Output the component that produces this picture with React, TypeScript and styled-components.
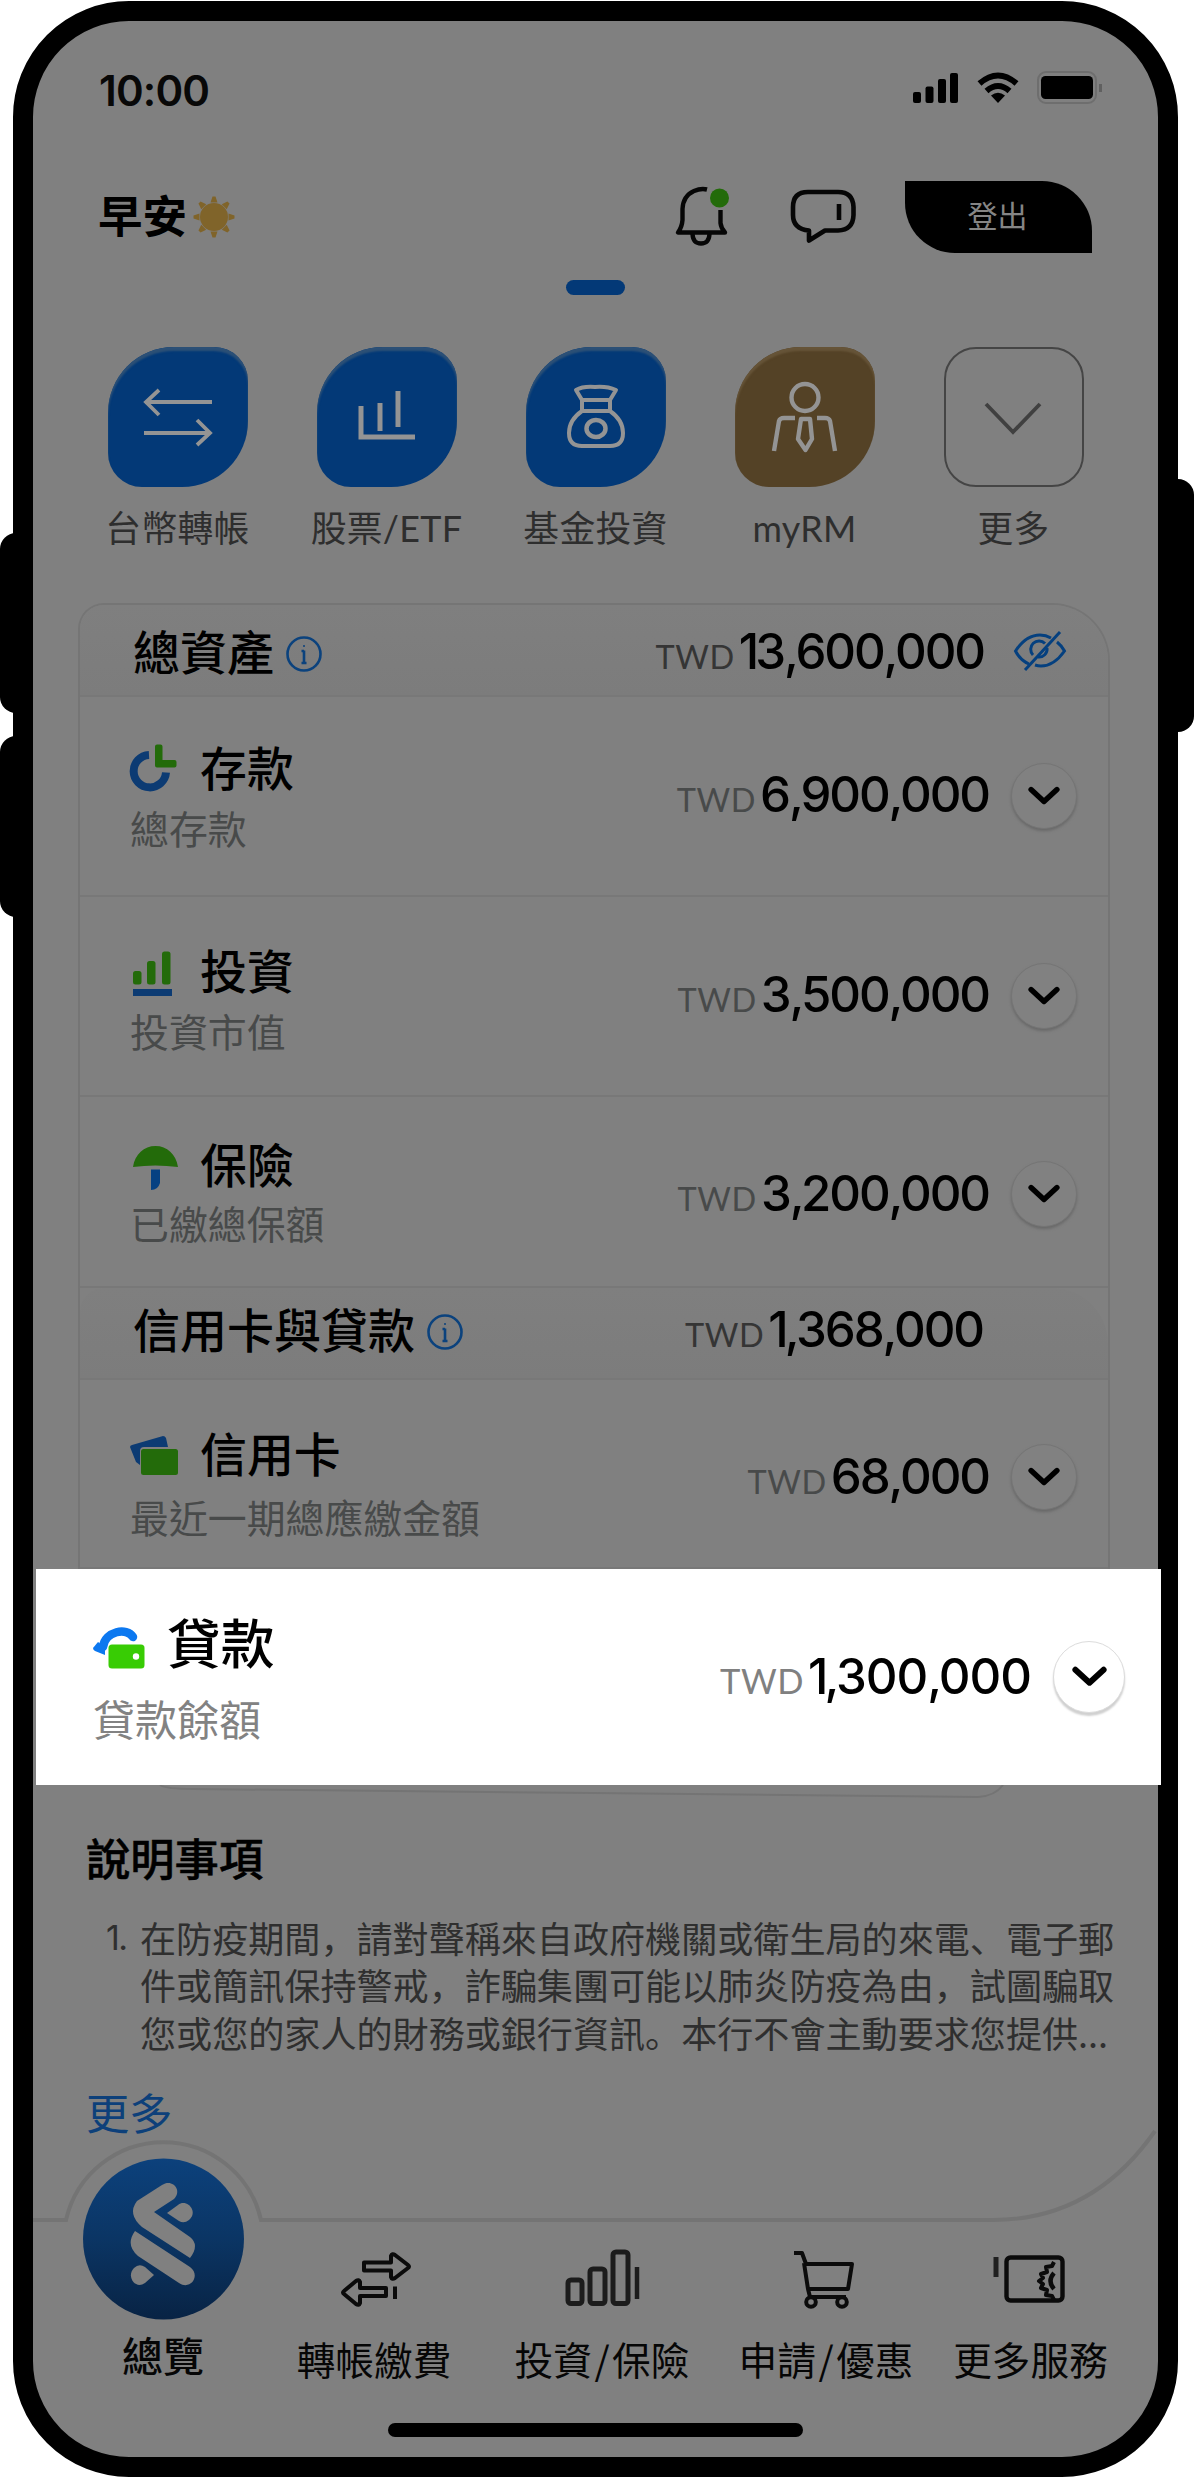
import React from 'react';
import styled, { createGlobalStyle } from 'styled-components';

const CJK = '"Noto Sans CJK TC", "Noto Sans CJK SC", sans-serif';
const LATIN = 'Lato, "Noto Sans CJK TC", sans-serif';
const GREY = '#808080';
const LINE = '#757575';
const BLUE = '#033977';
const GREEN = '#236b0a';

const GlobalStyle = createGlobalStyle`
  *, *::before, *::after { box-sizing: border-box; }
  body { margin: 0; background: #fff; font-family: ${CJK}; color: #000; }
  svg { display: block; flex: none; overflow: visible; }
`;

const Stage = styled.div`
  position: relative;
  width: 1194px;
  height: 2478px;
  padding: 1px 0 0 13px;
  overflow: hidden;
`;

const SideButton = styled.div<{ $side: 'left' | 'right'; $top: number; $height: number }>`
  position: absolute;
  ${p => p.$side}: 0;
  top: ${p => p.$top}px;
  width: 36px;
  height: ${p => p.$height}px;
  border-radius: ${p => (p.$side === 'left' ? '16px 0 0 16px' : '0 16px 16px 0')};
  background: #000;
`;

const Device = styled.main`
  position: relative;
  display: flex;
  flex-direction: column;
  width: 1165px;
  height: 2476px;
  border: 20px solid #000;
  border-radius: 116px;
  background: ${GREY};
`;

const StatusBar = styled.div`
  display: flex;
  align-items: center;
  justify-content: space-between;
  height: 140px;
  padding: 0 54px 0 66px;
`;

const Clock = styled.span`
  font: 600 42px/50px Inter, sans-serif;
  letter-spacing: -0.8px;
  color: #080808;
`;

const StatusIcons = styled.div`
  display: flex;
  align-items: center;
  gap: 19px;
  margin-top: -6px;
`;

const Header = styled.header`
  display: flex;
  align-items: center;
  height: 112px;
  padding: 0 66px 0 65px;
`;

const Greeting = styled.div`
  display: flex;
  align-items: center;
  gap: 6px;
  flex: 1;
  font-size: 44.5px;
  font-weight: 700;
  line-height: 60px;
`;

const GreetingText = styled.span`
  margin-top: -6px;
`;

const Actions = styled.div`
  display: flex;
  align-items: center;
  gap: 61px;
`;

const LogoutButton = styled.button`
  width: 187px;
  height: 72px;
  margin-left: -12px;
  padding: 0 2px 6px 0;
  border: 0;
  border-radius: 0 50px 0 50px;
  background: #000;
  color: #858585;
  font: 400 30px/40px ${CJK};
`;

const Pager = styled.div`
  width: 59px;
  height: 15px;
  margin: 7px 0 52px 533px;
  border-radius: 8px;
  background: ${BLUE};
`;

const Shortcuts = styled.nav`
  display: grid;
  grid-template-columns: repeat(5, 209px);
  padding-left: 40px;
`;

const Shortcut = styled.div`
  display: flex;
  flex-direction: column;
  align-items: center;
  gap: 17px;
`;

const Tile = styled.div<{ $kind: 'blue' | 'gold' | 'outline' }>`
  display: flex;
  align-items: center;
  justify-content: center;
  width: 140px;
  height: 140px;
  border-radius: ${p => (p.$kind === 'outline' ? '32px' : '66px 34px 66px 34px')};
  border: ${p => (p.$kind === 'outline' ? '2px solid #454545' : '0')};
  background: ${p => (p.$kind === 'blue' ? BLUE : p.$kind === 'gold' ? '#544226' : 'transparent')};
  box-shadow: ${p =>
    p.$kind === 'blue' ? 'inset 0 4px 2px #2c5076' : p.$kind === 'gold' ? 'inset 0 4px 2px #665438' : 'none'};
`;

const ShortcutLabel = styled.span`
  font: 400 35.8px/50px ${LATIN};
  letter-spacing: 0.3px;
  color: #2e2e2e;
  white-space: nowrap;
`;

const Card = styled.section`
  width: 1032px;
  margin: 49px 0 0 45px;
  border: 2px solid ${LINE};
  border-bottom: 0;
  border-radius: 26px 58px 0 0;
`;

const SectionHead = styled.div<{ $end: number; $lift: number }>`
  display: flex;
  align-items: center;
  justify-content: space-between;
  height: 92px;
  padding: 0 ${p => p.$end}px ${p => p.$lift}px 53px;
  border-bottom: 2px solid #787878;
  border-radius: 24px 56px 0 0;
  background: linear-gradient(#7f7f7f, #7c7c7c);
`;

const SectionTitle = styled.div`
  display: flex;
  align-items: center;
  gap: 12px;
  font-size: 47px;
  font-weight: 500;
  line-height: 60px;

  & > svg { margin-top: 8px; }
`;

const AmountSide = styled.div<{ $gap: number; $shift?: number }>`
  display: flex;
  align-items: center;
  gap: ${p => p.$gap}px;
  margin-top: ${p => p.$shift ?? 0}px;
`;

const AmountText = styled.div<{ $drop: number }>`
  display: flex;
  align-items: baseline;
  gap: 4px;
  margin-top: ${p => p.$drop}px;
  white-space: nowrap;
`;

const Currency = styled.span<{ $tone: string; $size: number }>`
  font-family: ${LATIN};
  font-size: ${p => p.$size}px;
  letter-spacing: 0.6px;
  color: ${p => p.$tone};
`;

const Digits = styled.span<{ $track: number }>`
  font: 500 49.2px/60px Inter, sans-serif;
  letter-spacing: ${p => p.$track}px;
`;

const One = styled.span`
  letter-spacing: -4px;
`;

const Comma = styled.span`
  letter-spacing: -3.5px;
`;

const Row = styled.div<{ $height: number; $top: number }>`
  display: flex;
  justify-content: space-between;
  height: ${p => p.$height}px;
  padding: 0 31px 0 50px;
  border-bottom: 2px solid #787878;

  & > :first-child { padding-top: ${p => p.$top}px; }
`;

const RowInfo = styled.div<{ $gap: number }>`
  display: flex;
  flex-direction: column;
  gap: ${p => p.$gap}px;
`;

const RowTitle = styled.div<{ $size?: number }>`
  display: flex;
  align-items: center;
  gap: 22px;
  font-size: ${p => p.$size ?? 46.9}px;
  font-weight: 500;
  line-height: 60px;
`;

const RowSub = styled.div<{ $size?: number; $tone?: string }>`
  font-size: ${p => p.$size ?? 38.9}px;
  line-height: 50px;
  color: ${p => p.$tone ?? '#484a4a'};
`;

const Toggle = styled.button<{ $size: number; $bright?: boolean }>`
  display: flex;
  align-items: center;
  justify-content: center;
  width: ${p => p.$size}px;
  height: ${p => p.$size}px;
  padding: 0;
  border: 1px solid ${p => (p.$bright ? '#dcdcdc' : '#757575')};
  border-radius: 50%;
  background: ${p => (p.$bright ? '#fff' : '#818181')};
  box-shadow: ${p => (p.$bright ? '0 3px 2px #d0d0d0' : '0 2px 3px #686868')};
`;

const Spotlight = styled.section`
  display: flex;
  justify-content: space-between;
  flex: none;
  width: 1125px;
  height: 216px;
  margin-left: 3px;
  padding: 42px 36px 0 57px;
  background: #fff;
  z-index: 1;
`;

const Notes = styled.section`
  padding: 27px 0 0 53px;
`;

const NotesTitle = styled.h2`
  margin: 0 0 27px;
  font-size: 44.3px;
  font-weight: 500;
  line-height: 60px;
  -webkit-text-stroke: 0.5px #000;
`;

const Note = styled.div`
  display: flex;
  color: #2f2f2f;
  font: 400 36.1px/47.3px "Noto Sans CJK SC", sans-serif;
  white-space: nowrap;
`;

const NoteNumber = styled.span`
  width: 54px;
  padding-left: 20px;
  font-family: Inter, sans-serif;
  font-size: 34px;
  letter-spacing: -1.5px;
`;

const MoreLink = styled.a`
  display: block;
  margin-top: 30px;
  font-size: 43.3px;
  line-height: 50px;
  color: #0d407a;
`;

const BottomNav = styled.nav`
  position: relative;
  display: grid;
  grid-template-columns: 260px 162px 294px 154px 255px;
  height: 298px;
  margin-top: -11px;
`;

const NavEdge = styled.svg`
  position: absolute;
  left: 0;
  top: 0;
`;

const NavItem = styled.div<{ $home?: boolean }>`
  display: flex;
  flex-direction: column;
  align-items: center;
  gap: ${p => (p.$home ? 9 : 22)}px;
  padding-top: ${p => (p.$home ? 33 : 122)}px;
  font-size: ${p => (p.$home ? 41 : 38.7)}px;
  font-weight: ${p => (p.$home ? 500 : 400)};
  line-height: 50px;
  color: #060606;
  white-space: nowrap;
`;

const Slash = styled.span`
  margin: 0 2.5px;
`;

const HomeIndicator = styled.div`
  width: 415px;
  height: 14px;
  margin-left: 355px;
  border-radius: 7px;
  background: #000;
`;

const Chevron = ({ width = 32 }: { width?: number }) => (
  <svg width={width} height={width * 0.56} viewBox="0 0 32 18" fill="none" stroke="#000" strokeWidth="5.4" strokeLinecap="round" strokeLinejoin="round">
    <path d="M3 2.500l13 12L29 2.500" />
  </svg>
);

const InfoIcon = () => (
  <svg width="36" height="36" viewBox="0 0 36 36" fill="none" stroke="#0b427d" strokeWidth="2.6">
    <circle cx="18" cy="18" r="16.5" />
    <path d="M18 14.5V27M15.500 27h5M15.500 15H18" />
    <circle cx="18" cy="10" r="1" fill="#0b427d" stroke="none" />
  </svg>
);

const EyeOffIcon = () => (
  <svg width="52" height="40" viewBox="0 0 52 40" fill="none" stroke="#05407f" strokeWidth="3">
    <path d="M15 34Q6 30 1.500 21Q12 5 26 5Q32 5 37 8M43 12Q48 16 50.500 21Q40 36 27 36Q24 36 21 35" />
    <path d="M19 25A8 8 0 0 1 31 13.500M33 18A8 8 0 0 1 24 27" />
    <path d="M11 40L46 2" />
  </svg>
);

const DepositIcon = () => (
  <svg width="48" height="60" viewBox="0 0 48 60" fill="none">
    <path d="M19 19A16.200 16.200 0 1 0 36 36.500" stroke="#0c3b73" strokeWidth="8" />
    <path d="M27 10.500h3.500v15.500h14v3.500H27z" fill={GREEN} stroke={GREEN} strokeWidth="4" strokeLinejoin="round" />
  </svg>
);

const InvestIcon = () => (
  <svg width="48" height="60" viewBox="0 0 48 60">
    <g fill={GREEN}>
      <rect x="3" y="32" width="8.500" height="13.500" rx="2.500" />
      <rect x="17" y="22" width="8.500" height="23.500" rx="2.500" />
      <rect x="32" y="12.500" width="8.500" height="33" rx="2.500" />
    </g>
    <rect x="3" y="50" width="39" height="7" fill="#0c3b73" />
  </svg>
);

const InsuranceIcon = () => (
  <svg width="48" height="60" viewBox="0 0 48 60" fill="none">
    <path d="M3 34C5 21 14 13 25.500 13S46 21 48 34Q25 31 3 34Z" fill={GREEN} />
    <path d="M21 36.500H30V50Q28 57 21 57Z" fill="#064182" />
  </svg>
);

const CardIcon = () => (
  <svg width="48" height="60" viewBox="0 0 48 60">
    <path d="M2 23L33 14Q35 14 36 16L38 25H14Q10 25 10 29V43L6 40L0 25Q0 23.500 2 23Z" fill="#0c3b73" />
    <rect x="11" y="27" width="37" height="26" rx="2.500" fill={GREEN} />
  </svg>
);

const LoanIcon = () => (
  <svg width="52" height="60" viewBox="0 0 52 60" fill="none">
    <path d="M10 36C12 20 34 16 40 26" stroke="#0c78f0" strokeWidth="8.500" strokeLinecap="round" />
    <path d="M5 31L0 37Q0 39 2 40L12 44V36z" fill="#0c78f0" />
    <rect x="15.500" y="33.500" width="36" height="24" rx="3.500" fill="#38cc04" />
    <circle cx="43" cy="45.500" r="3.200" fill="#fff" />
  </svg>
);

const Signal = () => (
  <svg width="45" height="32" viewBox="0 0 45 32">
    <rect x="0" y="20" width="8" height="11" rx="2" />
    <rect x="12.500" y="14.500" width="8" height="16.500" rx="2" />
    <rect x="25" y="7" width="8" height="24" rx="2" />
    <rect x="37" y="1" width="8" height="30" rx="2" />
  </svg>
);

const Wifi = () => (
  <svg width="42" height="32" viewBox="0 0 42 32" fill="none" stroke="#000" strokeWidth="6">
    <path d="M2.500 11.500Q21-4.500 39.500 11.500" />
    <path d="M9.500 19Q21 9 32.500 19" />
    <path d="M14 23.500Q21 18 28 23.500L21 31Z" fill="#000" stroke="none" />
  </svg>
);

const Battery = () => (
  <svg width="66" height="32" viewBox="0 0 66 32" fill="none">
    <rect x="0" y="0" width="58" height="31" rx="8" stroke="#6e6e6e" strokeWidth="2" />
    <rect x="3" y="4" width="52" height="23" rx="4.500" fill="#000" />
    <path d="M62.500 12v8" stroke="#606060" strokeWidth="3" />
  </svg>
);

const Sun = () => (
  <svg width="42" height="42" viewBox="-21 -21 42 42" fill="#80642a">
    <circle r="14" />
    {[0, 45, 90, 135, 180, 225, 270, 315].map(a => (
      <path key={a} d="M-3.500 -14.500L-1.500 -20.500H1.500L3.500 -14.500Z" transform={`rotate(${a})`} />
    ))}
  </svg>
);

const Bell = () => (
  <svg width="54" height="60" viewBox="0 0 54 60" fill="none" stroke="#060606" strokeWidth="4.400">
    <path d="M32 2.500Q26 1 19 4Q8 9 7.500 22V33Q7 40 3 45.500H50Q46 41 45.500 36V23" strokeLinejoin="round" />
    <path d="M17.500 47Q18 56.500 26 56.500T34.500 47" />
    <circle cx="44.5" cy="11" r="9.500" fill={GREEN} stroke="none" />
  </svg>
);

const Chat = () => (
  <svg width="66" height="56" viewBox="0 0 66 56" fill="none" stroke="#060606" strokeWidth="4.600" strokeLinejoin="round">
    <path d="M18 3H48Q63 3 63.500 18V26Q63 41 48 41.500H35L19 51.500V41.500Q3 40 3 26V18Q3 3 18 3Z" />
    <path d="M49 15v16" />
  </svg>
);

type GlyphProps = { stroke?: string; strokeWidth?: number | string };

const Stroke = styled.svg.attrs<GlyphProps>(p => ({
  fill: 'none',
  stroke: p.stroke ?? '#949494',
  strokeWidth: p.strokeWidth ?? 3.6,
}))``;

const TransferGlyph = () => (
  <Stroke width="70" height="60" viewBox="0 0 70 60" strokeWidth="3.8">
    <path d="M69 15H4M16 3L3 15L16 28M1 46H66M54 33L67 46L54 58" />
  </Stroke>
);

const StockGlyph = () => (
  <Stroke width="58" height="56" viewBox="0 0 58 56" strokeWidth="5">
    <path d="M3 17V48H57M22 14V42M40 2V38" />
  </Stroke>
);

const FundGlyph = () => (
  <Stroke width="60" height="64" viewBox="0 0 60 64" strokeLinejoin="round" strokeWidth="4">
    <path d="M16 15L10 5Q17 1 29 2Q41 1 50 5L44 15V26Q57 35 57 48Q57 61 44 61H16Q3 61 3 48Q3 35 16 26ZM16 15H44M16 26H44" />
    <ellipse cx="30" cy="43.500" rx="9.500" ry="8.500" strokeWidth="4.500" />
  </Stroke>
);

const PersonGlyph = () => (
  <Stroke width="66" height="70" viewBox="0 0 66 70" strokeWidth="4.4">
    <circle cx="33" cy="15.500" r="13.500" />
    <path d="M2 69L7 39Q8 36 12 36H23M63 69L58 39Q57 36 53 36H45" />
    <path d="M29 37H38L40 57L33.500 68L26 57Z" strokeLinejoin="round" />
  </Stroke>
);

const MoreGlyph = () => (
  <Stroke width="58" height="34" viewBox="0 0 58 34" stroke="#404040" strokeWidth="3.8">
    <path d="M1 4L28 32L55 4" />
  </Stroke>
);

const HomeGlyph = () => (
  <svg width="162" height="162" viewBox="0 0 162 162">
    <defs>
      <linearGradient id="home" x1="0" y1="0" x2="0" y2="1">
        <stop offset="0" stopColor="#0c417c" />
        <stop offset="0.5" stopColor="#0b3564" />
        <stop offset="1" stopColor="#082344" />
      </linearGradient>
    </defs>
    <circle cx="81.500" cy="81" r="80.500" fill="url(#home)" />
    <g fill={GREY}>
      <path d="M80 27C90 20 101 32 92 41L72 54L108 79Q118 87 108 100L60 69Q45 56 55 43Z" />
      <path d="M53 73L108 109C119 117 109 133 97 125L56 98Q43 87 53 73Z" />
      <path d="M85 55L96 47C105 40 117 54 107 62Q102 66 97 63Z" />
      <path d="M72 117L63 125C53 132 44 118 52 110Q57 105 63 109Z" />
    </g>
  </svg>
);

const NavStroke = styled.svg.attrs<GlyphProps>(p => ({
  width: 76,
  height: 64,
  viewBox: '0 0 76 64',
  fill: 'none',
  stroke: p.stroke ?? '#0b0b0b',
  strokeWidth: p.strokeWidth ?? 4.4,
  strokeLinejoin: 'round' as const,
}))``;

const PayGlyph = () => (
  <NavStroke strokeWidth="4">
    <path d="M28 15.500H55V9Q56 6 59 8L72 18Q74 19.500 72 21L59 31Q56 33 55 30V23.500H28Z" />
    <path d="M50 41H24V35Q23 32 20 34L8 44Q6 45.500 8 47L20 57Q23 59 24 56V49H50Z" />
    <path d="M59 39.500v12.500" />
  </NavStroke>
);

const ChartGlyph = () => (
  <NavStroke stroke="#1c1c1c" strokeWidth="5">
    <rect x="4" y="33" width="14" height="23.500" rx="3" />
    <rect x="26" y="22" width="15" height="34.500" rx="3" />
    <rect x="49" y="5" width="15" height="51.500" rx="3" />
    <path d="M73 20v32" strokeWidth="4.500" />
  </NavStroke>
);

const CartGlyph = () => (
  <NavStroke strokeWidth="4">
    <path d="M6 6H14L18 17H64L60 42H20L16 16M20 42L22 50H58" />
    <circle cx="23" cy="55" r="4.800" />
    <circle cx="54" cy="55" r="4.800" />
  </NavStroke>
);

const WalletGlyph = () => (
  <NavStroke>
    <path d="M3 10v20" stroke="#202020" strokeWidth="5" />
    <rect x="13.500" y="10.500" width="56" height="43" rx="4" />
    <path d="M61 15L59 19L53 20L54 25L48 27L50 31L46 34L50 37L48 41L54 43L53 48L59 49L61 53" strokeWidth="4" />
    <path d="M61 26Q54 34 61 42" />
  </NavStroke>
);

type AmountProps = { value: string; tone?: string; size?: number; track?: number; drop?: number };

const Amount = ({ value, tone = '#484a4a', size = 32.5, track = -2.1, drop = -3 }: AmountProps) => (
  <AmountText $drop={drop}>
    <Currency $tone={tone} $size={size}>TWD</Currency>
    <Digits $track={track}>
      {value.split('').map((ch, i) =>
        ch === ',' ? <Comma key={i}>,</Comma> : ch === '1' ? <One key={i}>1</One> : ch,
      )}
    </Digits>
  </AmountText>
);

type AccountProps = {
  icon: React.ReactNode; title: string; sub: string; value: string;
  height: number; top: number; gap: number; shift?: number;
};

const Account = ({ icon, title, sub, value, height, top, gap, shift = -1 }: AccountProps) => (
  <Row $height={height} $top={top}>
    <RowInfo $gap={gap}>
      <RowTitle>{icon}{title}</RowTitle>
      <RowSub>{sub}</RowSub>
    </RowInfo>
    <AmountSide $gap={22} $shift={shift}>
      <Amount value={value} />
      <Toggle $size={66}><Chevron /></Toggle>
    </AmountSide>
  </Row>
);

const shortcuts = [
  { label: '台幣轉帳', kind: 'blue', glyph: <TransferGlyph /> },
  { label: '股票/ETF', kind: 'blue', glyph: <StockGlyph /> },
  { label: '基金投資', kind: 'blue', glyph: <FundGlyph /> },
  { label: 'myRM', kind: 'gold', glyph: <PersonGlyph /> },
  { label: '更多', kind: 'outline', glyph: <MoreGlyph /> },
] as const;

export default function App() {
  return (
    <Stage>
      <GlobalStyle />
      <SideButton $side="left" $top={533} $height={180} />
      <SideButton $side="left" $top={736} $height={181} />
      <SideButton $side="right" $top={479} $height={253} />
      <Device>
        <StatusBar>
          <Clock>10:00</Clock>
          <StatusIcons><Signal /><Wifi /><Battery /></StatusIcons>
        </StatusBar>
        <Header>
          <Greeting><GreetingText>早安</GreetingText><Sun /></Greeting>
          <Actions>
            <Bell />
            <Chat />
            <LogoutButton>登出</LogoutButton>
          </Actions>
        </Header>
        <Pager />
        <Shortcuts>
          {shortcuts.map(s => (
            <Shortcut key={s.label}>
              <Tile $kind={s.kind}>{s.glyph}</Tile>
              <ShortcutLabel>{s.label}</ShortcutLabel>
            </Shortcut>
          ))}
        </Shortcuts>
        <Card>
          <SectionHead $end={42} $lift={0}>
            <SectionTitle>總資產<InfoIcon /></SectionTitle>
            <AmountSide $gap={30}>
              <Amount value="13,600,000" tone="#353535" drop={1} />
              <EyeOffIcon />
            </AmountSide>
          </SectionHead>
          <Account icon={<DepositIcon />} title="存款" sub="總存款" value="6,900,000" height={200} top={39} gap={6} />
          <Account icon={<InvestIcon />} title="投資" sub="投資市值" value="3,500,000" height={200} top={42} gap={6} />
          <Account icon={<InsuranceIcon />} title="保險" sub="已繳總保額" value="3,200,000" height={191} top={36} gap={4} shift={5} />
          <SectionHead $end={125} $lift={10}>
            <SectionTitle>信用卡與貸款<InfoIcon /></SectionTitle>
            <Amount value="1,368,000" tone="#353535" drop={2} />
          </SectionHead>
          <Account icon={<CardIcon />} title="信用卡" sub="最近一期總應繳金額" value="68,000" height={189} top={42} gap={9} shift={7} />
        </Card>
        <Spotlight>
          <RowInfo $gap={22}>
            <RowTitle $size={53.8}><LoanIcon />貸款</RowTitle>
            <RowSub $size={42} $tone="#828282">貸款餘額</RowSub>
          </RowInfo>
          <AmountSide $gap={22} $shift={-42}>
            <Amount value="1,300,000" tone="#808080" size={34.5} track={-1} />
            <Toggle $size={72} $bright><Chevron width={35} /></Toggle>
          </AmountSide>
        </Spotlight>
        <svg width="1125" height="15" viewBox="0 0 1125 15" fill="none" stroke="#747474" strokeWidth="2">
          <path d="M127 0Q133 4 160 4L560 8L945 12Q962 11 970 0" />
        </svg>
        <Notes>
          <NotesTitle>說明事項</NotesTitle>
          <Note>
            <NoteNumber>1.</NoteNumber>
            <div>
              在防疫期間，請對聲稱來自政府機關或衛生局的來電、電子郵<br />
              件或簡訊保持警戒，詐騙集團可能以肺炎防疫為由，試圖騙取<br />
              您或您的家人的財務或銀行資訊。本行不會主動要求您提供...
            </div>
          </Note>
          <MoreLink>更多</MoreLink>
        </Notes>
        <BottomNav>
          <NavEdge width="1125" height="100" viewBox="0 0 1125 100" fill="none" stroke="#747474" strokeWidth="4">
            <path d="M0 95H33A100 100 0 0 1 228 95H960Q1060 95 1122 6" />
          </NavEdge>
          <NavItem $home><HomeGlyph /><span>總覽</span></NavItem>
          <NavItem><PayGlyph /><span>轉帳繳費</span></NavItem>
          <NavItem><ChartGlyph /><span>投資<Slash>/</Slash>保險</span></NavItem>
          <NavItem><CartGlyph /><span>申請<Slash>/</Slash>優惠</span></NavItem>
          <NavItem><WalletGlyph /><span>更多服務</span></NavItem>
        </BottomNav>
        <HomeIndicator />
      </Device>
    </Stage>
  );
}
